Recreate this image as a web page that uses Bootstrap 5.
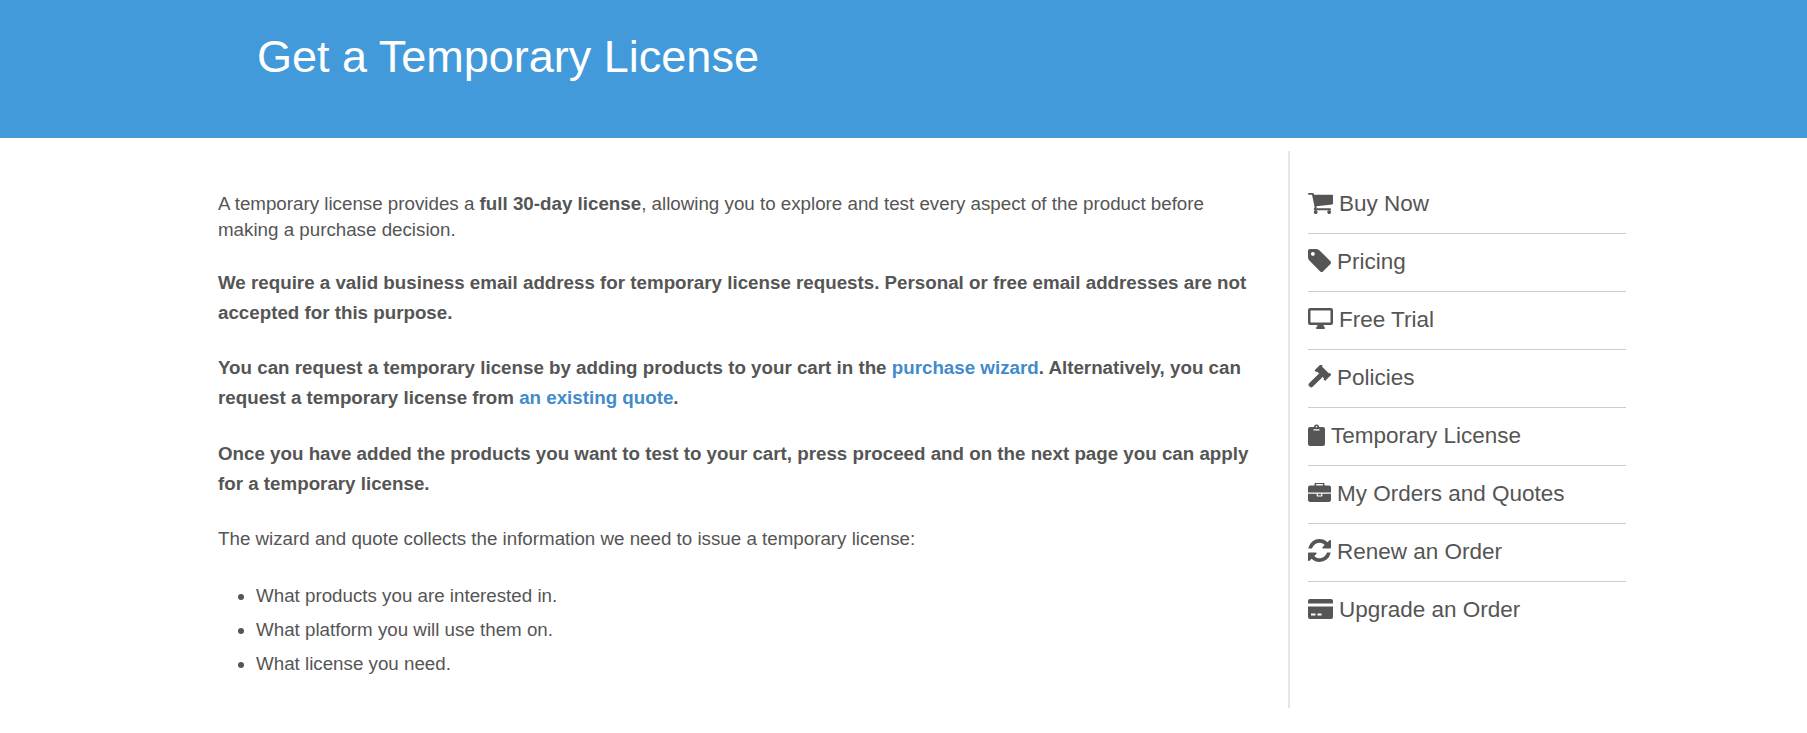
<!DOCTYPE html>
<html lang="en">
<head>
<meta charset="utf-8">
<title>Get a Temporary License</title>
<link href="https://cdn.jsdelivr.net/npm/bootstrap@5.3.0/dist/css/bootstrap.min.css" rel="stylesheet">
<style>
body{font-family:"Liberation Sans",Arial,sans-serif;color:#555;background:#fff;font-size:18.75px}
.hero-band{background:#429ada;height:138px}
.hero-title{font-family:"Liberation Sans",Arial,sans-serif;font-size:45px;font-weight:400;line-height:50px;color:#fff;margin:0;padding:32px 0 0 257px}
.page-wrap{padding:13px 180px 0 218px;gap:29px}
.main-copy{width:1041px;padding-top:40px;flex:none}
.main-copy p{margin:0 0 25.3px;line-height:30px}
.main-copy p.intro-copy{line-height:26px;margin-bottom:25px}
.main-copy p.strong-copy{font-weight:700}
.main-copy a{color:#428bca;text-decoration:none}
.main-copy strong{font-weight:700}
.main-copy ul{margin:0;padding-left:38px}
.main-copy li{line-height:34px}
.side-rail{border-left:2px solid #e6e6e6;width:340px;height:557px;padding:25px 0 0 18px}
.side-link{display:flex;align-items:center;height:58px;padding-bottom:2px;border-bottom:1px solid #ccc;color:#555;font-size:22.5px;text-decoration:none;width:318px}
.side-item-last{border-bottom:0}
.side-ico{fill:#555;flex:none;margin-right:6px;margin-bottom:2px}
</style>
</head>
<body>
<header class="hero-band"><h1 class="hero-title">Get a Temporary License</h1></header>
<div class="d-flex page-wrap">
  <main class="main-copy">
    <p class="intro-copy">A temporary license provides a <strong>full 30-day license</strong>, allowing you to explore and test every aspect of the product before making a purchase decision.</p>
    <p class="strong-copy">We require a valid business email address for temporary license requests. Personal or free email addresses are not accepted for this purpose.</p>
    <p class="strong-copy">You can request a temporary license by adding products to your cart in the <a href="#">purchase wizard</a>. Alternatively, you can request a temporary license from <a href="#">an existing quote</a>.</p>
    <p class="strong-copy">Once you have added the products you want to test to your cart, press proceed and on the next page you can apply for a temporary license.</p>
    <p>The wizard and quote collects the information we need to issue a temporary license:</p>
    <ul>
      <li>What products you are interested in.</li>
      <li>What platform you will use them on.</li>
      <li>What license you need.</li>
    </ul>
  </main>
  <nav class="side-rail">
    <a class="side-link" href="#"><svg class="side-ico" width="25" height="23" viewBox="64 128 1664 1536" preserveAspectRatio="none"><path d="M704 1536q0 52-38 90t-90 38-90-38-38-90 38-90 90-38 90 38 38 90zm896 0q0 52-38 90t-90 38-90-38-38-90 38-90 90-38 90 38 38 90zm128-1088v512q0 24-16.500 42.500t-40.500 21.500l-1044 122q13 60 13 70 0 16-24 64h920q26 0 45 19t19 45-19 45-45 19h-1024q-26 0-45-19t-19-45q0-11 8-31.500t16-36 21.500-40 15.500-29.500l-177-823h-204q-26 0-45-19t-19-45 19-45 45-19h256q16 0 28.500 6.500t19.500 15.500 13 24.500 8 26 5.500 29.500 4.500 26h1201q26 0 45 19t19 45z"/></svg>Buy Now</a>
    <a class="side-link" href="#"><svg class="side-ico" width="23" height="23" viewBox="128 128 1515 1515"><path d="M576 448q0-53-37.500-90.500t-90.500-37.500-90.500 37.500-37.500 90.500 37.500 90.500 90.500 37.500 90.500-37.500 37.500-90.500zm1067 576q0 53-37 90l-491 492q-39 37-91 37-53 0-90-37l-715-716q-38-37-64.500-101t-26.500-117v-416q0-52 38-90t90-38h416q53 0 117 26.500t102 64.500l715 714q37 39 37 91z"/></svg>Pricing</a>
    <a class="side-link" href="#"><svg class="side-ico" width="25" height="22" viewBox="0 0 25 22"><path fill-rule="evenodd" d="M2 0h21a2 2 0 0 1 2 2v13a2 2 0 0 1-2 2h-7.500c0 1.500 1.500 2 1.500 3.200 0 .5-.4.8-.8.8H8.800c-.4 0-.8-.3-.8-.8 0-1.200 1.500-1.700 1.500-3.200H2a2 2 0 0 1-2-2V2a2 2 0 0 1 2-2zM2.500 2.500v12h20v-12z"/></svg>Free Trial</a>
    <a class="side-link" href="#"><svg class="side-ico" width="23" height="23" viewBox="0 0 23 23"><g transform="rotate(45 15 7.500)"><rect x="8.500" y="4" width="13" height="7"/><rect x="7.500" y="3" width="2.500" height="9" rx=".6"/><rect x="20" y="3" width="2.500" height="9" rx=".6"/></g><rect x="5" y="7" width="5" height="17" rx="2" transform="rotate(45 7.500 15.500)"/></svg>Policies</a>
    <a class="side-link" href="#"><svg class="side-ico" width="17" height="22" viewBox="0 0 17 22"><path fill-rule="evenodd" d="M6 3a2.500 2.500 0 0 1 5 0h4c1.100 0 2 .9 2 2v15c0 1.100-.9 2-2 2H2c-1.100 0-2-.9-2-2V5c0-1.100.9-2 2-2zM5.500 5.200v1.200h6V5.200zM8.500 2a.8.8 0 1 0 0 1.600.8.8 0 0 0 0-1.600z"/></svg>Temporary License</a>
    <a class="side-link" href="#"><svg class="side-ico" width="23" height="19" viewBox="0 64 1792 1472"><path d="M640 256h512v-128h-512v128zm1152 640v480q0 66-47 113t-113 47h-1472q-66 0-113-47t-47-113v-480h672v160q0 26 19 45t45 19h320q26 0 45-19t19-45v-160h672zm-768 0v128h-256v-128h256zm768-480v384h-1792v-384q0-66 47-113t113-47h352v-160q0-40 28-68t68-28h576q40 0 68 28t28 68v160h352q66 0 113 47t47 113z"/></svg>My Orders and Quotes</a>
    <a class="side-link" href="#"><svg class="side-ico" width="23" height="23" viewBox="128 128 1536 1536"><path d="M1639 1056q0 5-1 7-64 268-268 434.500t-478 166.500q-146 0-282.500-55t-243.500-157l-129 129q-19 19-45 19t-45-19-19-45v-448q0-26 19-45t45-19h448q26 0 45 19t19 45-19 45l-137 137q71 66 161 102t187 36q134 0 250-65t186-179q11-17 53-117 8-23 30-23h192q13 0 22.500 9.500t9.500 22.500zm25-800v448q0 26-19 45t-45 19h-448q-26 0-45-19t-19-45 19-45l138-138q-148-137-349-137-134 0-250 65t-186 179q-11 17-53 117-8 23-30 23h-199q-13 0-22.500-9.500t-9.500-22.500v-7q65-268 270-434.500t480-166.500q146 0 284 55.500t245 156.500l130-129q19-19 45-19t45 19 19 45z"/></svg>Renew an Order</a>
    <a class="side-link side-item-last" href="#"><svg class="side-ico" width="25" height="20" viewBox="0 0 25 20"><path fill-rule="evenodd" d="M2 0h21a2 2 0 0 1 2 2v2.500H0V2a2 2 0 0 1 2-2zM0 7.500h25V18a2 2 0 0 1-2 2H2a2 2 0 0 1-2-2zM3 14.500v2h4.500v-2zM9.500 14.500v2h4v-2z"/></svg>Upgrade an Order</a>
  </nav>
</div>
<script src="https://cdn.jsdelivr.net/npm/bootstrap@5.3.0/dist/js/bootstrap.bundle.min.js"></script>
</body>
</html>
